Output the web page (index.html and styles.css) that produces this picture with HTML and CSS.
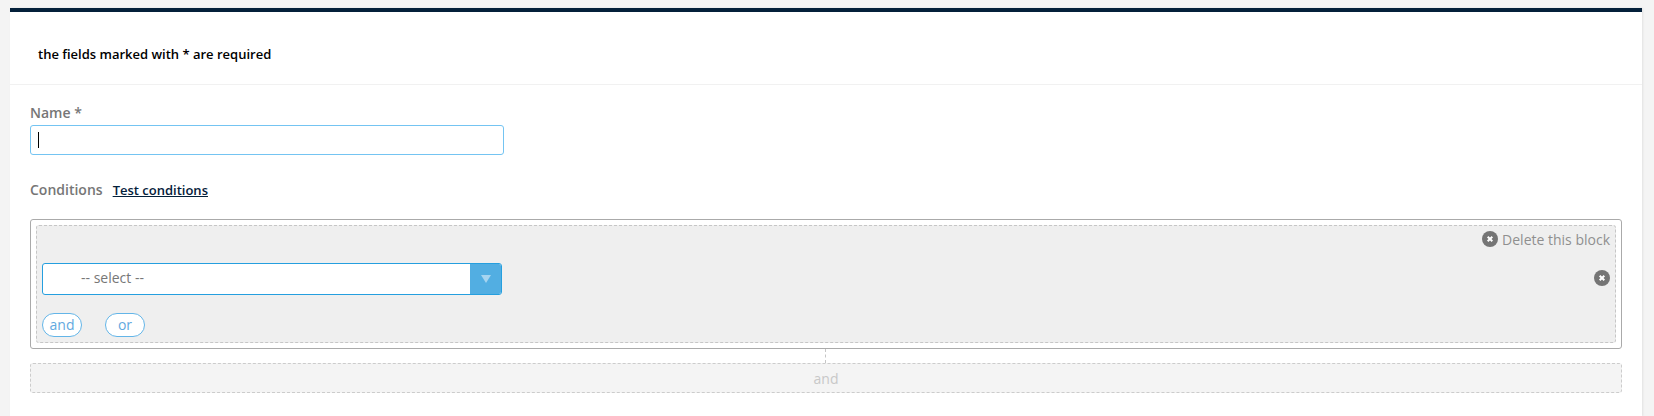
FILE: index.html
```html
<!DOCTYPE html>
<html lang="en">
<head>
    <meta charset="UTF-8">
    <title>New segment</title>
    <link rel="stylesheet" href="styles.css">
</head>
<body>
    <div class="panel">
        <div class="panel-header">the fields marked with * are required</div>
        <div class="panel-body">
            <label class="field-label">Name *</label>
            <div class="text-input"><span class="caret"></span></div>

            <div class="conditions-head">
                <span class="field-label">Conditions</span>
                <a class="test-link" href="#">Test conditions</a>
            </div>

            <div class="block">
                <div class="block-inner">
                    <div class="block-top">
                        <a class="delete-block" href="#">
                            <svg class="x-icon" viewBox="0 0 16 16"><circle cx="8" cy="8" r="8"/><path d="M5.7 5.7l4.6 4.6M10.3 5.7l-4.6 4.6"/></svg>
                            Delete this block
                        </a>
                    </div>
                    <div class="condition-row">
                        <div class="select">
                            <span class="select-value">-- select --</span>
                            <span class="select-arrow"><i></i></span>
                        </div>
                        <svg class="x-icon" viewBox="0 0 16 16"><circle cx="8" cy="8" r="8"/><path d="M5.7 5.7l4.6 4.6M10.3 5.7l-4.6 4.6"/></svg>
                    </div>
                    <div class="pills">
                        <button class="pill">and</button>
                        <button class="pill">or</button>
                    </div>
                </div>
            </div>
            <div class="connector"></div>
            <div class="add-block">and</div>
        </div>
    </div>
</body>
</html>
```

FILE: styles.css
```css
* {
    margin: 0;
    padding: 0;
    box-sizing: border-box;
    font-family: "Open Sans", sans-serif;
}

body {
    background: #f4f4f4;
    height: 416px;
    overflow: hidden;
    padding: 8px 12px 0 10px;
}

.panel {
    background: #ffffff;
    border-top: 4px solid #04203a;
    height: 408px;
    box-shadow: 1px 0 2px rgba(0, 0, 0, 0.08);
}

.panel-header {
    height: 73px;
    padding: 33px 28px 0;
    font-size: 13px;
    line-height: 18px;
    font-weight: 600;
    color: #000000;
    border-bottom: 1px solid #f1f1f1;
}

.panel-body {
    padding: 18px 20px 0 20px;
}

.field-label {
    display: block;
    font-size: 14px;
    line-height: 20px;
    font-weight: 600;
    color: #767676;
}

.text-input {
    width: 474px;
    height: 30px;
    margin-top: 2px;
    padding: 6px 7px;
    background: #fff;
    border: 1px solid #74c4f2;
    border-radius: 3px;
}

.caret {
    display: block;
    width: 1px;
    height: 16px;
    background: #000;
}

.conditions-head {
    display: flex;
    align-items: center;
    gap: 10px;
    margin-top: 25px;
    height: 20px;
}

.test-link {
    font-size: 13px;
    font-weight: 600;
    color: #04203a;
    text-decoration: underline;
}

.block {
    margin-top: 19px;
    height: 130px;
    padding: 5px;
    border: 1px solid #aaaaaa;
    border-radius: 3px;
}

.block-inner {
    height: 118px;
    padding: 0 5px;
    background: #efefef;
    border: 1px dashed #c6c6c6;
    border-radius: 3px;
}

.block-top {
    display: flex;
    justify-content: flex-end;
    height: 37px;
    padding-top: 3px;
}

.delete-block {
    display: flex;
    align-items: center;
    gap: 4px;
    height: 20px;
    font-size: 14px;
    color: #8f8f8f;
    text-decoration: none;
}

.x-icon {
    width: 16px;
    height: 16px;
    flex: none;
}

.x-icon circle {
    fill: #757575;
}

.x-icon path {
    stroke: #ffffff;
    stroke-width: 2;
    fill: none;
}

.condition-row {
    display: flex;
    justify-content: space-between;
    align-items: flex-start;
}

.condition-row .x-icon {
    margin-top: 7px;
}

.select {
    display: flex;
    width: 460px;
    height: 32px;
    background: #fff;
    border: 1px solid #259fdf;
    border-radius: 3px;
    overflow: hidden;
}

.select-value {
    flex: 1;
    padding-left: 38px;
    font-size: 14px;
    line-height: 28px;
    color: #777777;
}

.select-arrow {
    display: flex;
    align-items: center;
    justify-content: center;
    width: 31px;
    background: #52aee2;
}

.select-arrow i {
    display: block;
    border-top: 8px solid #a6d4f0;
    border-left: 5px solid transparent;
    border-right: 5px solid transparent;
}

.pills {
    display: flex;
    gap: 23px;
    margin-top: 18px;
}

.pill {
    width: 40px;
    height: 24px;
    background: #fff;
    border: 1px solid #63b5e8;
    border-radius: 12px;
    font-size: 14px;
    line-height: 20px;
    color: #63a9e0;
}

.connector {
    width: 0;
    height: 14px;
    margin-left: 795px;
    border-left: 1px dashed #c6c6c6;
}

.add-block {
    height: 30px;
    background: #f4f4f4;
    border: 1px dashed #cccccc;
    border-radius: 3px;
    text-align: center;
    font-size: 14px;
    line-height: 29px;
    color: #c8c8c8;
}
```
